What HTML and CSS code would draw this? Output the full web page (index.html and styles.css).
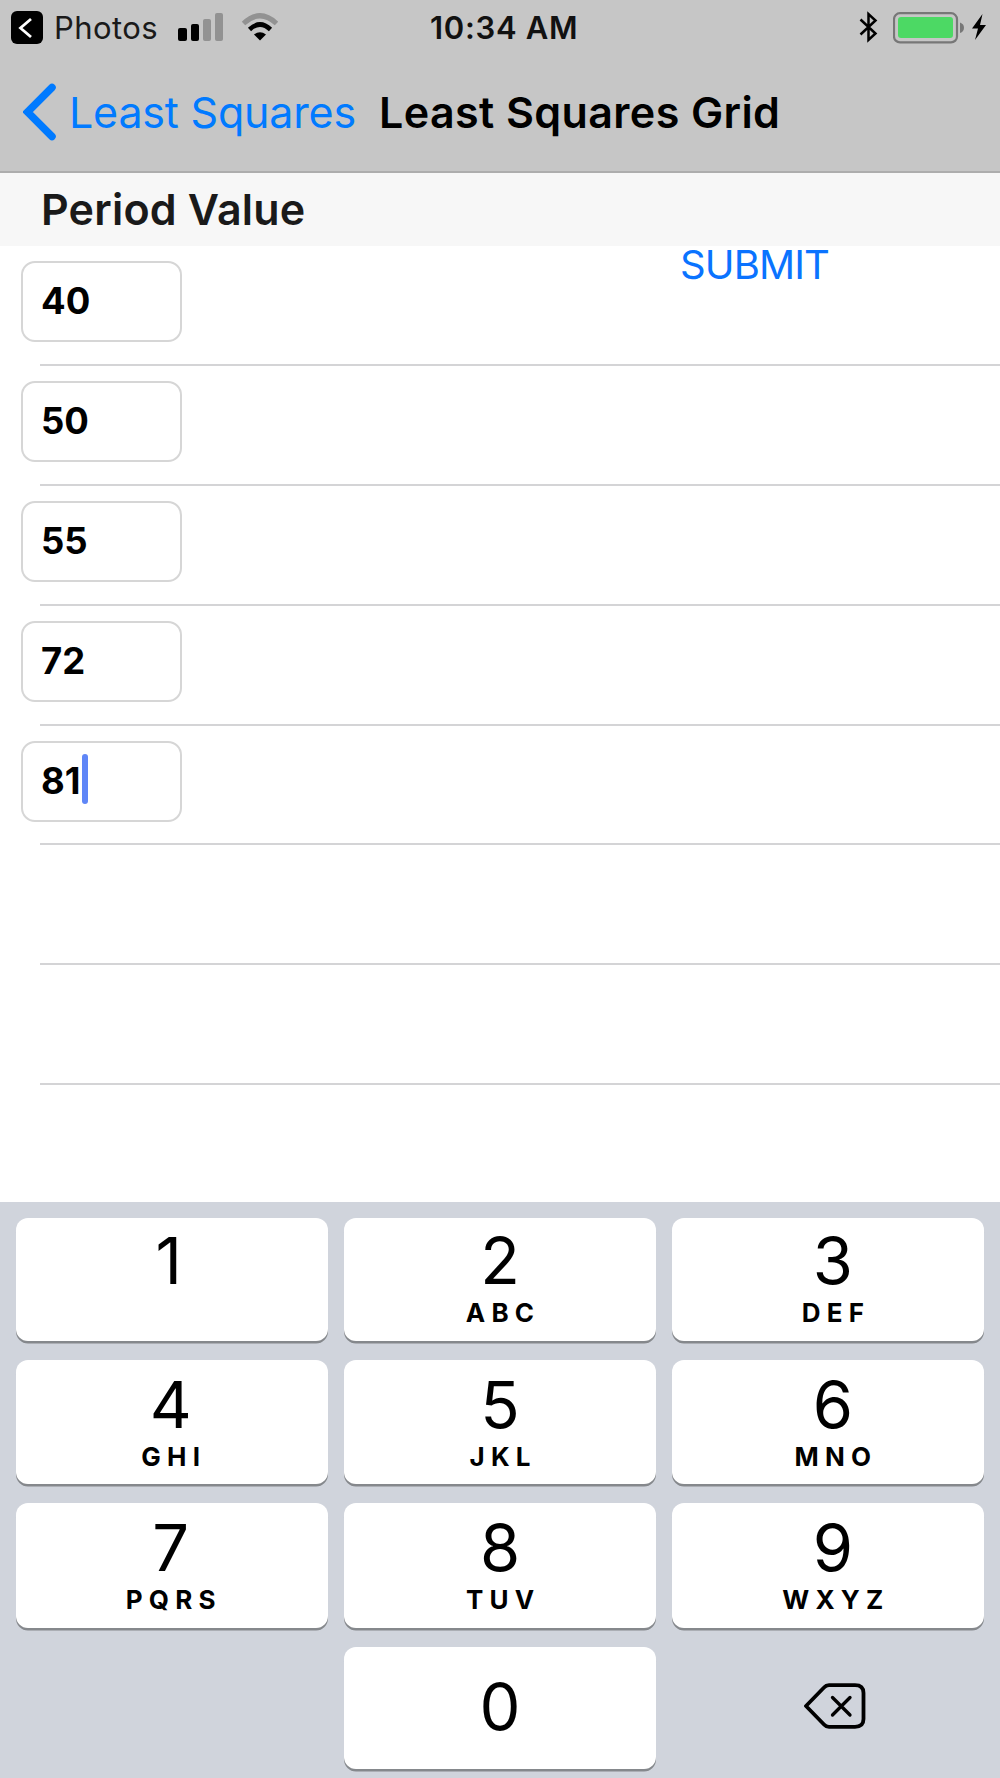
FILE: index.html
```html
<!DOCTYPE html>
<html lang="en">
<head>
    <meta charset="UTF-8">
    <meta name="viewport" content="width=device-width, initial-scale=1.0">
    <title>Least Squares Grid</title>
    <link rel="stylesheet" href="styles.css">
</head>
<body>
    <div class="top">
        <!-- Status bar -->
        <div class="status-bar">
            <div class="status-left">
                <svg class="back-app" width="32" height="33" viewBox="0 0 32 33">
                    <rect width="32" height="33" rx="6"/>
                    <path d="M20 8l-10.500 9 10.500 9" fill="none" stroke="#fff" stroke-width="2.800"/>
                </svg>
                <span class="app-name">Photos</span>
                <svg class="signal" width="46" height="28" viewBox="0 0 46 28">
                    <rect x="0" y="15" width="9" height="13" rx="2"/>
                    <rect x="13" y="11" width="8" height="17" rx="2"/>
                    <rect x="25" y="6" width="8" height="22" rx="2" fill="#929292"/>
                    <rect x="37" y="0" width="8" height="28" rx="2" fill="#929292"/>
                </svg>
                <svg class="wifi" width="38" height="28" viewBox="0 0 38 28">
                    <path d="M2.500 10.500Q19 -5 35.500 10.500" fill="none" stroke="#929292" stroke-width="5"/>
                    <path d="M8.500 16.500Q19 6.500 29.500 16.500" fill="none" stroke="#000" stroke-width="4.600"/>
                    <path d="M13 21.500Q19 17 25 21.500L19 27.500z"/>
                </svg>
            </div>
            <span class="time">10:34 AM</span>
            <div class="status-right">
                <svg class="bluetooth" width="20" height="32" viewBox="0 0 20 32">
                    <path d="M1.500 8.500l15 14L9.500 29V3l7 6.500-15 14" fill="none" stroke="#000" stroke-width="2.500"/>
                </svg>
                <svg class="battery" width="72" height="32" viewBox="0 0 72 32">
                    <rect x="1" y="1.200" width="63" height="29.200" rx="6" fill="none" stroke="#777" stroke-width="2.200"/>
                    <rect x="5" y="5" width="55" height="21" rx="3" fill="#4cd964"/>
                    <path d="M67 10.500q4 1.500 4 5.300t-4 5.300z" fill="#777"/>
                </svg>
                <svg class="bolt" width="16" height="26" viewBox="0 0 16 26">
                    <path d="M11.500 0L1 14.500h6L4 26l11-15H9z"/>
                </svg>
            </div>
        </div>

        <!-- Navigation bar -->
        <div class="nav-bar">
            <svg class="chevron" width="34" height="58" viewBox="0 0 34 58">
                <path d="M29 4.500L4.500 29 29 53.500" fill="none" stroke="#007aff" stroke-width="7.500" stroke-linecap="round"/>
            </svg>
            <span class="back-title">Least Squares</span>
            <h1>Least Squares Grid</h1>
        </div>
    </div>

    <h2>Period Value</h2>

    <!-- Values table -->
    <div class="table">
        <span class="submit">SUBMIT</span>
        <div class="row"><div class="field">40</div></div>
        <div class="row"><div class="field">50</div></div>
        <div class="row"><div class="field">55</div></div>
        <div class="row"><div class="field">72</div></div>
        <div class="row"><div class="field">81<span class="caret"></span></div></div>
        <div class="row"></div>
        <div class="row"></div>
    </div>

    <!-- Number pad -->
    <div class="keyboard">
        <div class="key left first one"><span class="digit">1</span></div>
        <div class="key first"><span class="digit">2</span><span class="letters">ABC</span></div>
        <div class="key right first"><span class="digit">3</span><span class="letters">DEF</span></div>
        <div class="key left"><span class="digit">4</span><span class="letters">GHI</span></div>
        <div class="key"><span class="digit">5</span><span class="letters">JKL</span></div>
        <div class="key right"><span class="digit">6</span><span class="letters">MNO</span></div>
        <div class="key left"><span class="digit">7</span><span class="letters">PQRS</span></div>
        <div class="key"><span class="digit">8</span><span class="letters">TUV</span></div>
        <div class="key right"><span class="digit">9</span><span class="letters">WXYZ</span></div>
        <div class="blank"></div>
        <div class="key zero"><span class="digit">0</span></div>
        <div class="delete">
            <svg width="62" height="46" viewBox="0 0 62 46" fill="none" stroke="#000" stroke-linejoin="round">
                <path d="M2 23L20 4.500Q22 2.200 25 2.200H51Q59.500 2.200 59.500 10V36Q59.500 43.800 51 43.800H25Q22 43.800 20 41.500z" stroke-width="3.800"/>
                <path d="M28.500 14.500L46 32M46 14.500L28.500 32" stroke-width="3.300" stroke-linecap="round"/>
            </svg>
        </div>
    </div>
</body>
</html>
```

FILE: styles.css
```css
/* General Page Styles */
body {
    font-family: Inter, "Liberation Sans", sans-serif;
    background-color: #fff;
    color: #000;
    margin: 0;
    height: 1778px;
    display: flex;
    flex-direction: column;
    overflow: hidden;
}

svg {
    display: block;
    flex-shrink: 0;
}

span, h1, h2 {
    white-space: nowrap;
}

.top {
    height: 171px;
    background-color: #c6c6c6;
    border-bottom: 2px solid #adadad;
}

/* Status bar */
.status-bar {
    display: grid;
    grid-template-columns: 430px 1fr 141px;
    height: 56px;
}

.status-left, .status-right {
    display: flex;
    align-items: flex-start;
}

.status-left {
    padding-left: 11px;
}

.back-app {
    margin-top: 11px;
}

.app-name {
    font-size: 31px;
    line-height: 38px;
    letter-spacing: 0.4px;
    margin: 9px 0 0 11px;
    width: 124px;
    color: #1a1a1a;
}

.signal {
    margin-top: 13px;
}

.wifi {
    margin: 13px 0 0 17px;
}

.time {
    font-size: 31px;
    font-weight: 600;
    line-height: 38px;
    letter-spacing: 0.7px;
    margin-top: 9px;
    color: #111;
}

.bluetooth {
    margin-top: 11px;
}

.battery {
    margin: 12px 0 0 14px;
}

.bolt {
    margin: 14px 0 0 6px;
}

/* Navigation bar */
.nav-bar {
    display: flex;
    align-items: flex-start;
    padding: 27px 0 0 23px;
}

.back-title {
    font-size: 43px;
    line-height: 52px;
    width: 310px;
    margin: 3px 0 0 12px;
    letter-spacing: -0.2px;
    color: #007aff;
}

h1 {
    font-size: 43px;
    font-weight: 600;
    line-height: 52px;
    letter-spacing: 0.4px;
    margin: 3px 0 0;
}

h2 {
    font-size: 43px;
    font-weight: 600;
    line-height: 52px;
    letter-spacing: 0.2px;
    margin: 0;
    padding: 10px 0 11px 41px;
    background-color: #f7f7f7;
    color: #1a1a1a;
}

/* Values table */
.table {
    position: relative;
    flex: 1;
}

.submit {
    position: absolute;
    left: 680px;
    top: -5px;
    font-size: 40px;
    line-height: 48px;
    letter-spacing: -0.9px;
    color: #0a73ff;
}

.row {
    height: 117.900px;
    box-sizing: border-box;
    padding: 15px 0 0 21px;
    margin-bottom: 2px;
    background-color: #fff;
    box-shadow: 40px 2px 0 #d4d4d6;
}

.field {
    position: relative;
    box-sizing: border-box;
    width: 161px;
    height: 81px;
    border: 2px solid #d6d6d6;
    border-radius: 14px;
    padding-left: 18px;
    font-size: 36.500px;
    font-weight: 700;
    line-height: 77px;
}

.caret {
    position: absolute;
    left: 59px;
    top: 11px;
    width: 6px;
    height: 50px;
    border-radius: 3px;
    background-color: #5f86f7;
}

/* Number pad */
.keyboard {
    box-sizing: border-box;
    height: 576px;
    padding: 16px 16px 0;
    display: grid;
    grid-template-columns: repeat(3, 1fr);
    grid-template-rows: 123px 124px 125px 122px;
    column-gap: 15.500px;
    row-gap: 19px;
    background-color: #d0d4dc;
}

.key {
    display: flex;
    flex-direction: column;
    align-items: center;
    padding-top: 5px;
    border-radius: 12px;
    background-color: #fff;
    box-shadow: 0 2.500px 0 #85888c;
}

.first {
    padding-top: 3px;
}

.left {
    padding-right: 3px;
}

.one {
    padding-right: 7px;
}

.right {
    padding-left: 10px;
}

.zero {
    padding-top: 20px;
}

.digit {
    font-size: 65px;
    line-height: 79px;
}

.letters {
    font-size: 26px;
    font-weight: 700;
    line-height: 32px;
    letter-spacing: 6.200px;
    margin: -3px -6.200px 0 0;
}

.delete {
    padding: 36px 0 0 132px;
}
```
